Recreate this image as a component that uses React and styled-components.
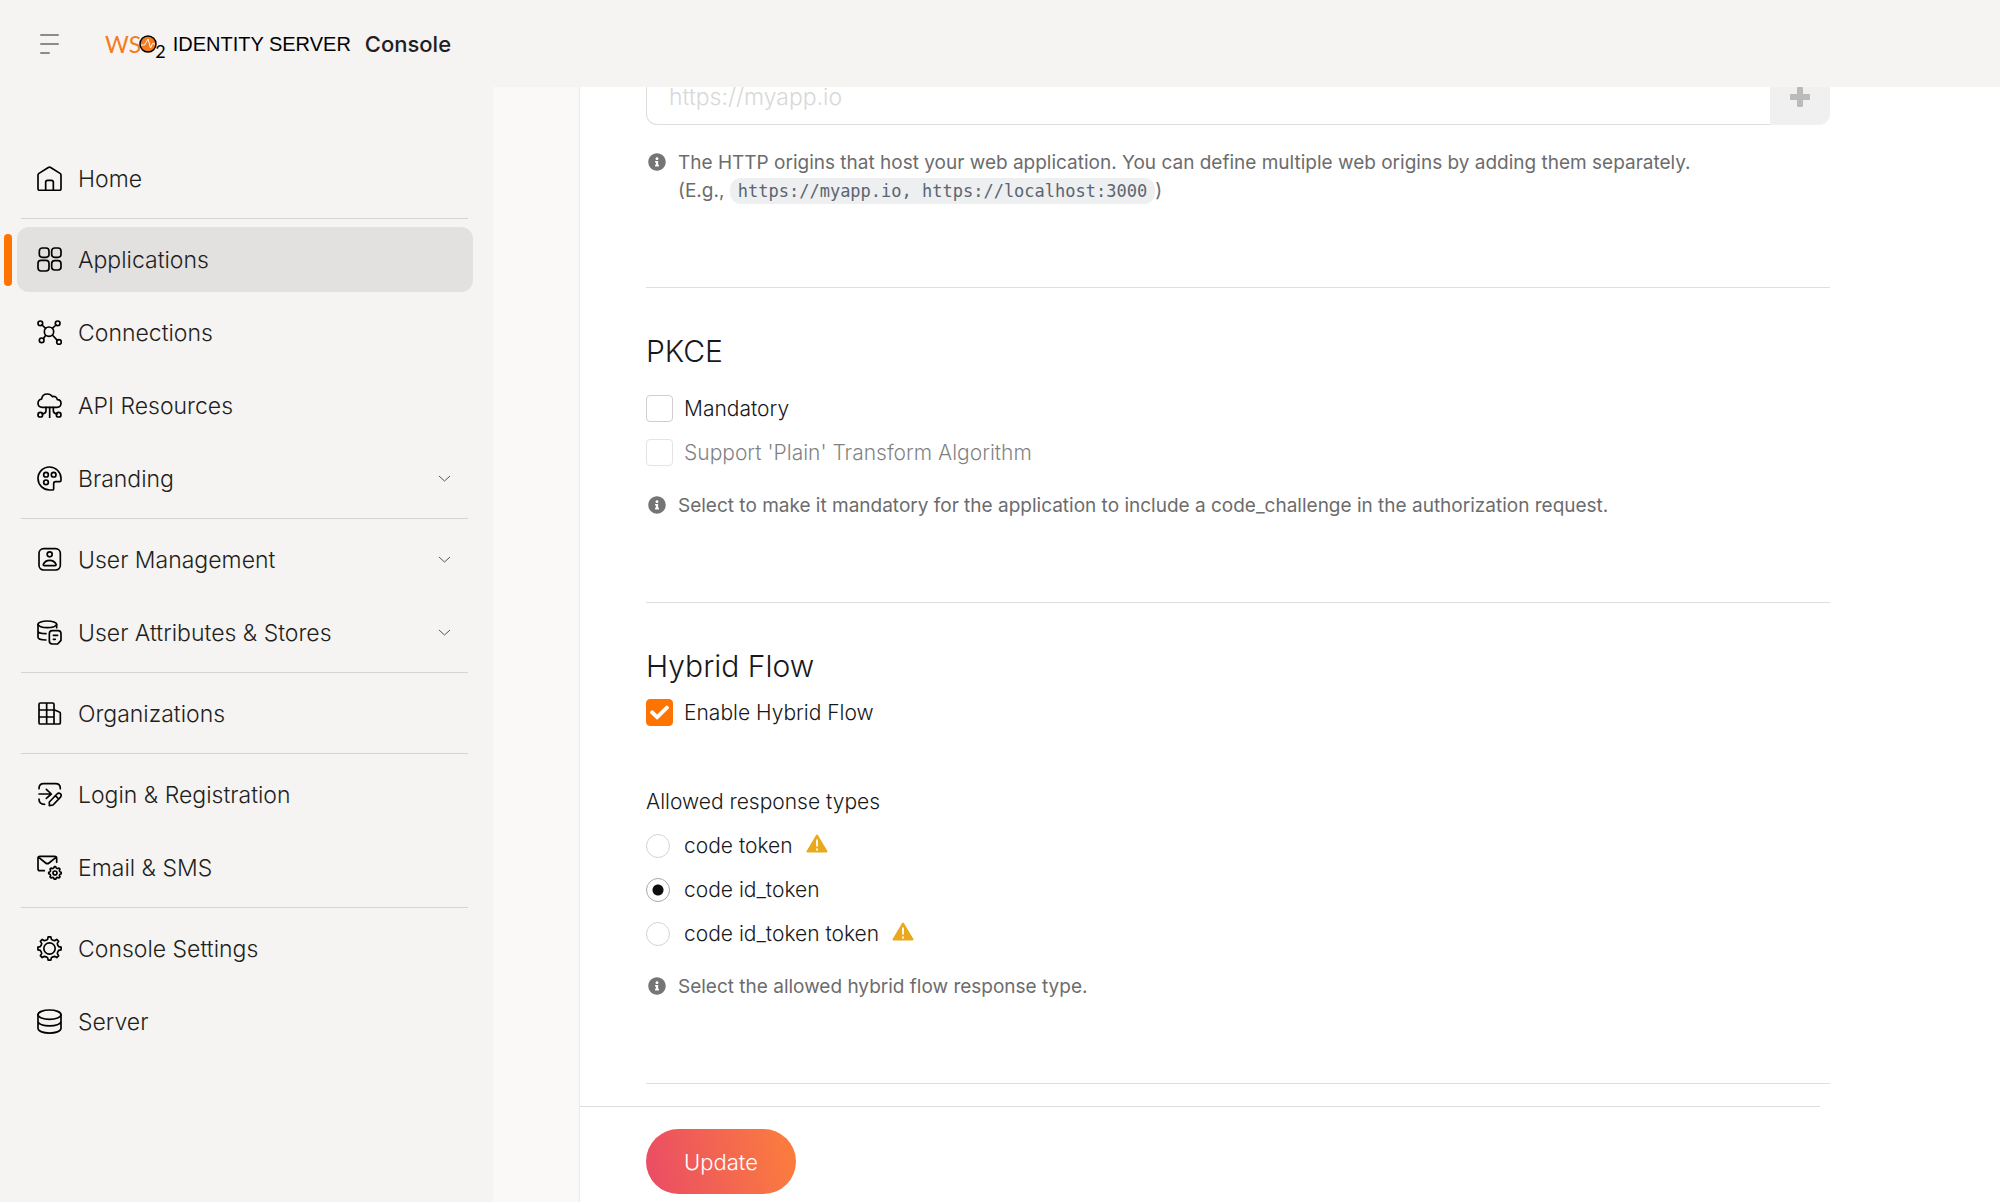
import React from "react";
import styled, { createGlobalStyle } from "styled-components";
import { FaCheck, FaInfoCircle } from "react-icons/fa";

const GlobalStyle = createGlobalStyle`
  *, *::before, *::after { box-sizing: border-box; }
  body {
    margin: 0;
    background: #ffffff;
    color: #17181a;
    font-family: Inter, "Liberation Sans", sans-serif;
    font-size: 21px;
    font-weight: 300;
    line-height: 28px;
  }
  button, input { font: inherit; }
`;

const Page = styled.div`
  display: flex;
  flex-direction: column;
  height: 100vh;
  overflow: hidden;
`;

const Header = styled.header`
  display: flex;
  align-items: center;
  flex: none;
  gap: 44px;
  height: 87px;
  padding: 0 38px;
  background: #f5f4f2;
`;

const MenuButton = styled.button`
  display: flex;
  padding: 0;
  border: 0;
  background: none;
  color: #8b8b89;
  cursor: pointer;
`;

const Brand = styled.a`
  display: flex;
  align-items: center;
  color: #000000;
  text-decoration: none;
`;

const BrandPrefix = styled.span`
  color: #f47b20;
  font-family: Lato, sans-serif;
  font-size: 23px;
  font-weight: 400;
`;

const BrandMark = styled.svg`
  width: 18px;
  height: 18px;
  margin-left: -2px;
`;

const BrandSub = styled.span`
  align-self: flex-end;
  margin: 0 7px -7px -2px;
  font-family: Lato, sans-serif;
  font-size: 18px;
  font-weight: 400;
`;

const BrandName = styled.span`
  font-family: "Liberation Sans", Arial, sans-serif;
  font-size: 20px;
`;

const BrandProduct = styled.span`
  margin-left: 14px;
  color: #1f2023;
  font-size: 22px;
  font-weight: 500;
`;

const Body = styled.div`
  display: flex;
  flex: 1;
  min-height: 0;
`;

const Sidebar = styled.nav`
  flex: none;
  width: 493px;
  padding: 59px 20px 0 17px;
  background: #f5f4f2;
`;

const NavGroup = styled.ul`
  display: flex;
  flex-direction: column;
  gap: 8px;
  margin: 0;
  padding: 0;
  list-style: none;
`;

const NavDivider = styled.hr`
  height: 1px;
  margin: 7px 5px 8px 4px;
  border: 0;
  background: #d5d4d2;
`;

const NavItem = styled.li`
  position: relative;

  &::before {
    content: "";
    position: absolute;
    top: 7px;
    left: -13px;
    width: 8px;
    height: 52px;
    border-radius: 4px;
    background: ${(p) => (p.$active ? "#ff7300" : "transparent")};
  }
`;

const NavLink = styled.a`
  display: flex;
  align-items: center;
  gap: 16px;
  height: 65px;
  padding: 0 22px 0 20px;
  border-radius: 12px;
  background: ${(p) => (p.$active ? "#e2e1df" : "transparent")};
  color: #1f1f1e;
  font-size: 23px;
  text-decoration: none;
`;

const NavLabel = styled.span`
  flex: 1;
`;

const NavGlyph = styled.svg`
  width: 25px;
  height: 25px;
  fill: none;
  stroke: #000000;
  stroke-width: 5;
  stroke-linecap: round;
  stroke-linejoin: round;
`;

const Content = styled.main`
  display: flex;
  flex: 1;
  flex-direction: column;
  min-width: 0;
  padding-left: 86px;
  background: #faf9f8;
`;

const Panel = styled.div`
  display: flex;
  flex: 1;
  flex-direction: column;
  min-height: 0;
  border-left: 1px solid #e9e9e9;
  background: #ffffff;
`;

const Scroller = styled.div`
  flex: 1;
  min-height: 0;
  overflow: hidden;
  padding: 0 170px 0 66px;
`;

const Form = styled.form`
  margin-top: -18px;
`;

const Section = styled.section`
  padding-bottom: 82px;
  border-bottom: 1px solid #dededf;
`;

const Field = styled.div`
  display: flex;
  height: 56px;
  margin-bottom: 24px;
`;

const FieldInput = styled.input`
  flex: 1;
  min-width: 0;
  padding: 0 22px;
  border: 1px solid #dededf;
  border-right: 0;
  border-radius: 11px 0 0 11px;
  outline: 0;
  background: #ffffff;
  color: inherit;
  font-size: 23px;

  &::placeholder { color: #d8d8d8; opacity: 1; }
`;

const AddButton = styled.button`
  display: flex;
  align-items: center;
  justify-content: center;
  width: 60px;
  padding: 0;
  border: 0;
  border-radius: 0 11px 11px 0;
  background: #f0f0f0;
  color: #bababa;
`;

const Hint = styled.p`
  display: grid;
  grid-template-columns: 18px 1fr;
  column-gap: 12px;
  margin: ${(p) => (p.$spaced ? "26px" : "0")} 0 0 2px;
  color: #6c6c6d;
  font-size: 19px;
  font-weight: 400;

  svg {
    margin-top: 4px;
    color: #757575;
    font-size: 18px;
  }
`;

const Code = styled.code`
  padding: 3px 8px;
  border-radius: 11px;
  background: #edeff1;
  color: #5c656f;
  font-family: "DejaVu Sans Mono", monospace;
  font-size: 17px;
`;

const Title = styled.h2`
  margin: 45px 0 ${(p) => p.$below};
  font-size: 30px;
  font-weight: 300;
  line-height: 36px;
`;

const Options = styled.div`
  display: flex;
  flex-direction: column;
  gap: 17px;
`;

const Fieldset = styled.fieldset`
  min-width: 0;
  margin: 62px 0 0;
  padding: 0;
  border: 0;
`;

const Legend = styled.legend`
  margin-bottom: 16px;
  padding: 0;
`;

const Option = styled.label`
  display: flex;
  align-items: center;
  gap: 11px;
  height: 27px;
  opacity: ${(p) => (p.$disabled ? 0.55 : 1)};
`;

const ControlBox = styled.span`
  display: grid;
  flex: none;
  place-items: center start;
  width: 27px;
  height: 27px;

  > * { grid-area: 1 / 1; }
`;

const Tick = styled(FaCheck)`
  justify-self: center;
  color: #ffffff;
  font-size: 19px;
  pointer-events: none;
`;

const Checkbox = styled.input.attrs({ type: "checkbox" })`
  appearance: none;
  width: 27px;
  height: 27px;
  margin: 0;
  border: 1px solid #cfcfd0;
  border-radius: 4px;
  background: #ffffff;

  &:checked { border-color: #ff7300; background: #ff7300; }
`;

const Radio = styled.input.attrs({ type: "radio" })`
  appearance: none;
  width: 24px;
  height: 24px;
  margin: 0;
  border: 1px solid #d4d4d5;
  border-radius: 50%;
  background: #ffffff;

  &:checked {
    border-color: #a8a8a8;
    background: radial-gradient(circle, #0f0f0f 5px, #ffffff 6px);
  }
`;

const WarningGlyph = styled.svg`
  width: 22px;
  height: 19px;
  margin: 0 0 4px 2px;
`;

const Footer = styled.footer`
  flex: none;
  margin-right: 180px;
  padding: 22px 0 8px 66px;
  border-top: 1px solid #dededf;
`;

const UpdateButton = styled.button`
  height: 65px;
  padding: 0 38px;
  border: 0;
  border-radius: 33px;
  background: linear-gradient(77deg, #eb4f63 8%, #fb7b3f 92%);
  color: #ffffff;
  font-size: 22px;
`;

function gearPath(cx, cy, outer, inner, teeth) {
  const step = (Math.PI * 2) / teeth;
  const at = (r, a) => `${(cx + r * Math.sin(a)).toFixed(1)} ${(cy - r * Math.cos(a)).toFixed(1)}`;
  let d = "";
  for (let i = 0; i < teeth; i += 1) {
    const a = i * step;
    d += `${i ? "L" : "M"}${at(inner, a - step * 0.26)}`;
    d += `L${at(outer, a - step * 0.15)}L${at(outer, a + step * 0.15)}`;
    d += `L${at(inner, a + step * 0.26)}`;
    d += `Q${at(inner - 2, a + step * 0.5)} ${at(inner, a + step * 0.74)}`;
  }
  return `${d}Z`;
}

const glyphs = {
  home: (
    <>
      <path d="M3 68V27q0-3 3-5L34 4.500q3.500-2 7 0L69 22q3 2 3 5v41q0 5-5 5H8q-5 0-5-5z" />
      <path d="M26 73V49q0-6 6-6h11q6 0 6 6v24" />
    </>
  ),
  apps: (
    <>
      <rect x="7" y="3" width="29" height="28" rx="9" />
      <rect x="44" y="3" width="28" height="28" rx="9" />
      <rect x="3" y="40" width="33" height="32" rx="9" />
      <rect x="44" y="41" width="28" height="28" rx="9" />
    </>
  ),
  connections: (
    <>
      <circle cx="36" cy="35" r="14" />
      <circle cx="10" cy="10" r="7" />
      <circle cx="62" cy="10" r="7" />
      <circle cx="14" cy="61" r="7" />
      <circle cx="66" cy="66" r="7" />
      <path d="M15 15l11 10M57 15L46 25M19 56l7-10M61 61L46 45" />
    </>
  ),
  api: (
    <>
      <path d="M16 43C6 43 3 36 3 31c0-7 5-12 11-13C15 8 22 3 31 3c7 0 12 3 15 8 7-3 14 2 15 9 7 0 11 5 11 11 0 7-4 12-12 12z" />
      <path d="M38 43v31M27 43v11q0 7-11 9M49 43v11q0 7 11 9" />
      <circle cx="10" cy="65" r="7" />
      <circle cx="65" cy="65" r="7" />
    </>
  ),
  branding: (
    <>
      <path d="M37.500 72A34.500 34.500 0 1 1 72 37v6q0 4-4 4H56q-6 0-6 6v15q0 4-4 4z" />
      <circle cx="27" cy="26" r="7" />
      <circle cx="50" cy="26" r="7" />
      <circle cx="27" cy="49" r="7" />
    </>
  ),
  users: (
    <>
      <rect x="6" y="5" width="64" height="64" rx="14" />
      <circle cx="38" cy="22" r="7.500" />
      <path d="M22 56q-4 0-3-4c4-9 10-12 19-12s15 3 19 12q1 4-3 4z" />
    </>
  ),
  stores: (
    <>
      <ellipse cx="31" cy="13" rx="28" ry="10" />
      <path d="M3 13v39c0 5 10 8 24 8M3 33c0 5 10 8 24 8M59 13v10" />
      <path d="M46 32h17q9 0 9 9v20L62 72H46q-9 0-9-9V41q0-9 9-9zM49 46h13M49 58h6" />
    </>
  ),
  organizations: (
    <path d="M6 10q0-4 4-4h37q4 0 4 4v59H10q-4 0-4-4zM29 6v63M6 27h45M6 48h45M51 26l16 7q3 1 3 4v28q0 4-4 4H51" />
  ),
  login: (
    <>
      <path d="M6 20Q6 5 20 5h36q14 0 14 15M6 36h35M28 22l15 14-15 13M6 51q0 16 17 16" />
      <path d="M37 71V60l23-24q5-5 10-1t0 11L48 69zM55 41l10 10" />
    </>
  ),
  email: (
    <>
      <path d="M22 47H9q-6 0-6-6V9q0-5 6-5h44q6 0 6 6v12M5 7l21 17q5 4 10 0L57 7" />
      <path d={gearPath(54, 54, 19, 16, 8)} />
      <circle cx="54" cy="54" r="6" />
    </>
  ),
  settings: (
    <>
      <path d={gearPath(37.5, 37.5, 35, 28, 8)} />
      <circle cx="37.500" cy="37.500" r="17" />
    </>
  ),
  server: (
    <>
      <ellipse cx="37.500" cy="17" rx="34.500" ry="14" />
      <path d="M3 17v41c0 19 69 19 69 0V17M3 37c0 18 69 18 69 0" />
    </>
  ),
};

const navGroups = [
  [{ label: "Home", glyph: "home" }],
  [
    { label: "Applications", glyph: "apps", active: true },
    { label: "Connections", glyph: "connections" },
    { label: "API Resources", glyph: "api" },
    { label: "Branding", glyph: "branding", expandable: true },
  ],
  [
    { label: "User Management", glyph: "users", expandable: true },
    { label: "User Attributes & Stores", glyph: "stores", expandable: true },
  ],
  [{ label: "Organizations", glyph: "organizations" }],
  [
    { label: "Login & Registration", glyph: "login" },
    { label: "Email & SMS", glyph: "email" },
  ],
  [
    { label: "Console Settings", glyph: "settings" },
    { label: "Server", glyph: "server" },
  ],
];

const responseTypes = [
  { label: "code token", warning: true },
  { label: "code id_token" },
  { label: "code id_token token", warning: true },
];

function Chevron() {
  return (
    <svg width="13" height="8" viewBox="0 0 13 8" fill="none" stroke="#555555" aria-hidden="true">
      <path d="M1 1l5.500 5L12 1" />
    </svg>
  );
}

function Plus() {
  return (
    <svg width="20" height="20" viewBox="0 0 20 20" fill="currentColor" aria-hidden="true">
      <rect x="0" y="7" width="20" height="6" rx="1" />
      <rect x="7" y="0" width="6" height="20" rx="1" />
    </svg>
  );
}

function Warning() {
  return (
    <WarningGlyph viewBox="0 0 22 19" aria-hidden="true">
      <path d="M11 1.500L20.500 17.500h-19z" fill="#eaa81c" stroke="#eaa81c" strokeWidth="2" strokeLinejoin="round" />
      <path d="M11 5.500v7M11 14.500v2" stroke="#ffffff" strokeWidth="1.800" />
    </WarningGlyph>
  );
}

function Navigation() {
  return (
    <Sidebar aria-label="Main">
      {navGroups.map((group, index) => (
        <React.Fragment key={group[0].label}>
          {index > 0 && <NavDivider />}
          <NavGroup>
            {group.map((item) => (
              <NavItem key={item.label} $active={item.active}>
                <NavLink href="#" $active={item.active}>
                  <NavGlyph viewBox="0 0 75 75" aria-hidden="true">{glyphs[item.glyph]}</NavGlyph>
                  <NavLabel>{item.label}</NavLabel>
                  {item.expandable && <Chevron />}
                </NavLink>
              </NavItem>
            ))}
          </NavGroup>
        </React.Fragment>
      ))}
    </Sidebar>
  );
}

export default function App() {
  return (
    <Page>
      <GlobalStyle />
      <Header>
        <MenuButton type="button" aria-label="Toggle navigation">
          <svg width="23" height="22" viewBox="0 0 23 22" fill="none" stroke="currentColor" strokeWidth="2" strokeLinecap="round">
            <path d="M3 2h17M3 11h17M3 20h8" />
          </svg>
        </MenuButton>
        <Brand href="#">
          <BrandPrefix>WS</BrandPrefix>
          <BrandMark viewBox="0 0 18 18" aria-hidden="true">
            <circle cx="9" cy="9" r="8" fill="#f47b20" stroke="#000000" strokeWidth="1.500" />
            <path d="M2 10h3.500L9 4l2.500 9L13.500 8.500 16 9" fill="none" stroke="#ffffff" />
          </BrandMark>
          <BrandSub>2</BrandSub>
          <BrandName>IDENTITY SERVER</BrandName>
          <BrandProduct>Console</BrandProduct>
        </Brand>
      </Header>
      <Body>
        <Navigation />
        <Content>
          <Panel>
            <Scroller>
              <Form id="protocol-form">
                <Section>
                  <Field>
                    <FieldInput type="url" placeholder="https://myapp.io" aria-label="Allowed origins" />
                    <AddButton type="button" aria-label="Add origin" disabled>
                      <Plus />
                    </AddButton>
                  </Field>
                  <Hint>
                    <FaInfoCircle />
                    <span>
                      The HTTP origins that host your web application. You can define multiple web origins by adding them separately.
                      <br />
                      (E.g., <Code>https://myapp.io, https://localhost:3000</Code>)
                    </span>
                  </Hint>
                </Section>
                <Section>
                  <Title $below="26px">PKCE</Title>
                  <Options>
                    <Option>
                      <ControlBox><Checkbox /></ControlBox>
                      Mandatory
                    </Option>
                    <Option $disabled>
                      <ControlBox><Checkbox disabled /></ControlBox>
                      Support 'Plain' Transform Algorithm
                    </Option>
                  </Options>
                  <Hint $spaced>
                    <FaInfoCircle />
                    <span>Select to make it mandatory for the application to include a code_challenge in the authorization request.</span>
                  </Hint>
                </Section>
                <Section>
                  <Title $below="15px">Hybrid Flow</Title>
                  <Option>
                    <ControlBox>
                      <Checkbox defaultChecked />
                      <Tick />
                    </ControlBox>
                    Enable Hybrid Flow
                  </Option>
                  <Fieldset>
                    <Legend>Allowed response types</Legend>
                    <Options>
                      {responseTypes.map((type) => (
                        <Option key={type.label}>
                          <ControlBox>
                            <Radio name="responseType" defaultChecked={type.label === "code id_token"} />
                          </ControlBox>
                          {type.label}
                          {type.warning && <Warning />}
                        </Option>
                      ))}
                    </Options>
                  </Fieldset>
                  <Hint $spaced>
                    <FaInfoCircle />
                    <span>Select the allowed hybrid flow response type.</span>
                  </Hint>
                </Section>
              </Form>
            </Scroller>
            <Footer>
              <UpdateButton type="submit" form="protocol-form">Update</UpdateButton>
            </Footer>
          </Panel>
        </Content>
      </Body>
    </Page>
  );
}
